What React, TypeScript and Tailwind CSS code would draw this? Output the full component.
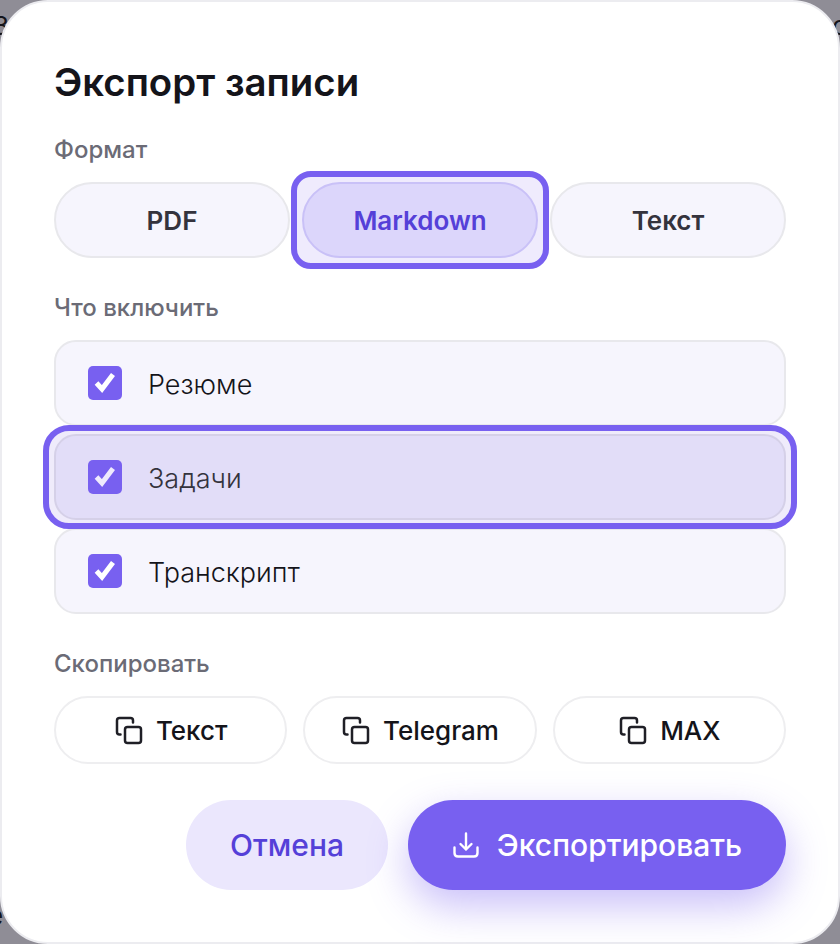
import React from "react";

const font = { fontFamily: '"Inter", "Noto Sans", sans-serif' };

function CopyIcon() {
  return (
    <svg width="30" height="30" viewBox="0 0 30 30" fill="none" stroke="#1f1f26" strokeWidth="2.5" strokeLinecap="round" strokeLinejoin="round">
      <rect x="11" y="12" width="16" height="16" rx="2.5" />
      <path d="M6.5 19.5H5.5C4 19.5 3 18.5 3 17V5.5C3 4 4 3 5.5 3h11C18 3 19 4 19 5.5V7.5" />
    </svg>
  );
}

function DownloadIcon() {
  return (
    <svg width="28" height="28" viewBox="0 0 28 28" fill="none" stroke="#ffffff" strokeWidth="2.4" strokeLinecap="round" strokeLinejoin="round">
      <path d="M14 2.5V18.5M8.5 13l5.5 5.5 5.5-5.5" />
      <path d="M2.5 16.5V22c0 2 1.4 3.5 3.5 3.5h16c2.1 0 3.5-1.5 3.5-3.5v-5.5" />
    </svg>
  );
}

function Check({ muted }: { muted?: boolean }) {
  return (
    <span className="w-[34px] h-[34px] rounded-[5px] bg-[#7860f0] flex items-center justify-center shrink-0">
      <svg width="34" height="34" viewBox="0 0 34 34" fill="none" stroke={muted ? "#efeafd" : "#ffffff"} strokeWidth="5">
        <path d="M8.5 17L14 23L25 8.5" />
      </svg>
    </span>
  );
}

function FormatBtn({ label, active }: { label: string; active?: boolean }) {
  return (
    <div className="relative flex-1">
      {active && (
        <span className="absolute -inset-[11px] rounded-[20px] border-[6px] border-[#7860f0] bg-[#efebfd]" />
      )}
      <button
        className={
          active
            ? "relative w-full h-[76px] rounded-full border-2 border-[#c9c1f7] bg-[#dcd6fb] text-[26px] font-semibold text-[#5540d8]"
            : "relative w-full h-[76px] rounded-full border-2 border-[#e8e8ec] bg-[#f6f5fd] text-[26px] font-semibold text-[#34333d]"
        }
      >
        {label}
      </button>
    </div>
  );
}

function Row({ label, active }: { label: string; active?: boolean }) {
  return (
    <div className={active ? "relative z-10" : "relative"}>
      {active && (
        <span className="absolute -inset-x-[11px] -inset-y-[9px] rounded-[26px] border-[6px] border-[#7860f0] bg-[#efebfb]" />
      )}
      <div
        className={
          active
            ? "relative h-[86px] rounded-[22px] border-2 border-[#d5d0e8] bg-[#e2ddf8] flex items-center pl-[32px] gap-[26px]"
            : "relative h-[86px] rounded-[22px] border-2 border-[#e8e8ec] bg-[#f6f5fd] flex items-center pl-[32px] gap-[26px]"
        }
      >
        <Check muted={active} />
        <span className={active ? "pt-[4px] text-[27px] font-light text-[#34333d]" : "pt-[4px] text-[27px] font-light text-[#14141a]"}>{label}</span>
      </div>
    </div>
  );
}

function CopyBtn({ label }: { label: string }) {
  return (
    <button className="flex-1 h-[68px] rounded-full border-2 border-[#eeeef0] bg-white flex items-center justify-center gap-[12px] text-[26px] font-medium text-[#14141a]">
      <CopyIcon />
      {label}
    </button>
  );
}

export default function App() {
  return (
    <div className="relative w-[840px] h-[944px] bg-[#8f8d96] overflow-hidden" style={font}>
      <span className="absolute left-[-7px] top-[6px] text-[26px] text-[#14141a]">З</span>
      <span className="absolute left-[832px] top-[6px] text-[26px] text-[#14141a]">с</span>
      <span className="absolute left-[-12px] top-[896px] text-[26px] text-[#14141a]">е</span>
      <div className="relative h-full rounded-[48px] border-2 border-[#ececf0] bg-white px-[52px] pt-[56px] flex flex-col">
        <h1 className="text-[38.4px] leading-[48px] font-semibold text-[#14141a]">Экспорт записи</h1>
        <div className="mt-[30px] text-[24px] leading-[28px] font-medium text-[#6b6b76]">Формат</div>
        <div className="mt-[18px] flex gap-[12px]">
          <FormatBtn label="PDF" />
          <FormatBtn label="Markdown" active />
          <FormatBtn label="Текст" />
        </div>
        <div className="mt-[36px] text-[24px] leading-[28px] font-medium text-[#6b6b76]">Что включить</div>
        <div className="mt-[18px] flex flex-col gap-[8px]">
          <Row label="Резюме" />
          <Row label="Задачи" active />
          <Row label="Транскрипт" />
        </div>
        <div className="mt-[36px] text-[24px] leading-[28px] font-medium text-[#6b6b76]">Скопировать</div>
        <div className="mt-[18px] flex gap-[16px]">
          <CopyBtn label="Текст" />
          <CopyBtn label="Telegram" />
          <CopyBtn label="MAX" />
        </div>
        <div className="mt-[36px] flex justify-end gap-[20px]">
          <button className="w-[202px] h-[90px] rounded-full bg-[#ebe7fd] text-[30px] font-medium text-[#5540d8]">Отмена</button>
          <button className="w-[378px] h-[90px] rounded-full bg-[#7860f0] text-[30px] font-medium text-white flex items-center justify-center gap-[17px] shadow-[0_16px_40px_rgba(120,96,240,0.4)]">
            <DownloadIcon />
            Экспортировать
          </button>
        </div>
      </div>
    </div>
  );
}
